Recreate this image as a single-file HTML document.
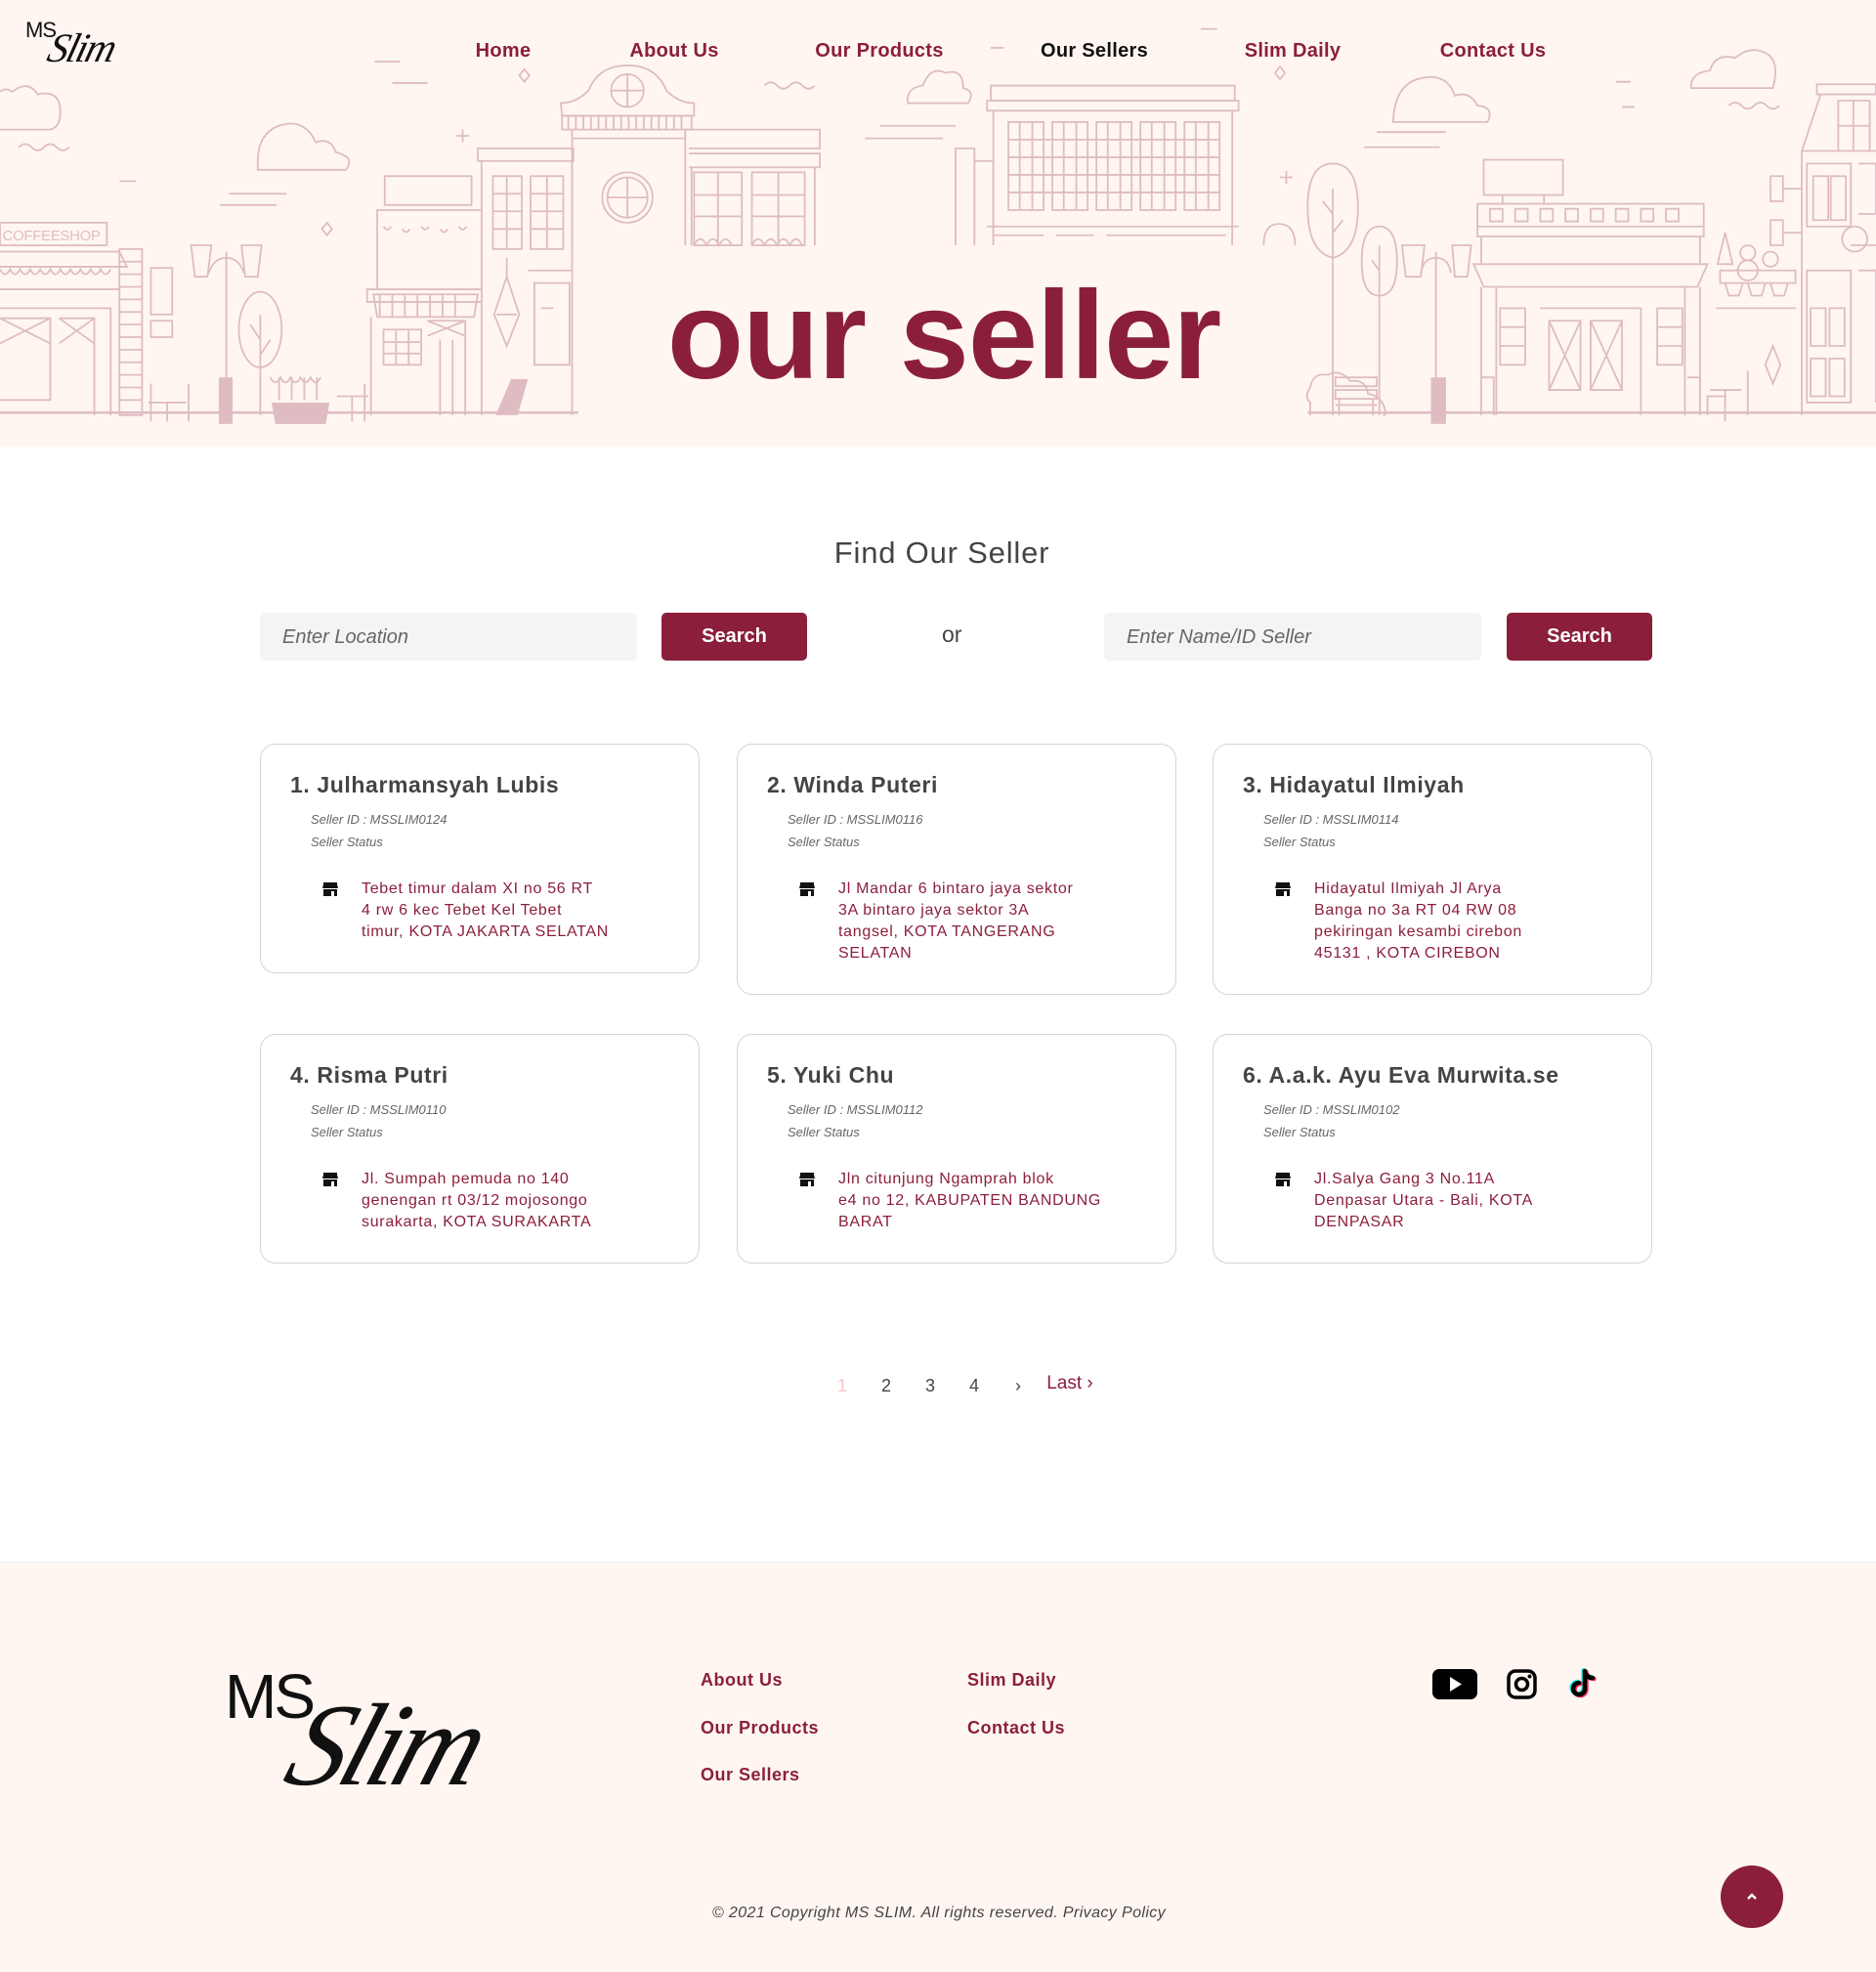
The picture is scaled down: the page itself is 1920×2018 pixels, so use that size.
<!DOCTYPE html>
<html><head><meta charset="utf-8">
<style>
*{margin:0;padding:0;box-sizing:border-box}
body{width:1920px;height:2018px;background:#fff;font-family:"Liberation Sans",sans-serif;position:relative;overflow:hidden}
.hero{position:absolute;left:0;top:0;width:1920px;height:457px;background:#fff6f1;overflow:hidden}
.hero svg{position:absolute;left:0;top:0}
.nav a{position:absolute;top:41px;font-size:20px;font-weight:bold;color:#8b1f3b;text-decoration:none;transform:translateX(-50%);white-space:nowrap;letter-spacing:.3px}
.nav a.act{color:#111}
.logo{position:absolute;left:26px;top:18px;width:110px;height:65px}
.logo .ms{position:absolute;left:0;top:0;font-size:22px;color:#111;letter-spacing:-1px}
.logo .sl{position:absolute;left:24px;top:8px;font-family:"Liberation Serif",serif;font-style:italic;font-size:42px;color:#111;transform:skewX(-15deg);letter-spacing:-2px}
.big{position:absolute;left:6px;width:1920px;text-align:center;top:270px;font-size:128px;font-weight:bold;color:#8b1f3b;letter-spacing:-1px}
h2{position:absolute;top:548px;width:1920px;text-align:center;font-size:31px;font-weight:normal;color:#444;left:4px;letter-spacing:.8px}
.inp{position:absolute;top:627px;height:49px;background:#f4f4f4;border-radius:5px;font-style:italic;color:#666;font-size:20px;padding:14px 23px}
.btn{position:absolute;top:627px;height:49px;width:149px;background:#8b1f3b;border-radius:5px;color:#fff;font-weight:bold;font-size:20px;text-align:center;line-height:49px}
.or{position:absolute;top:636px;left:964px;font-size:23px;color:#444}
.card{position:absolute;width:450px;border:1.5px solid #d4d4d4;border-radius:16px;background:#fff;padding:28px 30px 30px}
.card h3{font-size:23px;color:#444;font-weight:bold;margin-bottom:10px;letter-spacing:.6px}
.card .m{font-size:13px;font-style:italic;color:#666;padding-left:21px;line-height:23px}
.card .ad{position:relative;margin-top:26px;padding-left:73px;width:390px;white-space:nowrap;font-size:16px;line-height:22px;color:#8b1f3b;letter-spacing:.7px}
.card .ad svg{position:absolute;left:33px;top:4px}
.pg span{position:absolute;top:1408px;font-size:18px;color:#444;transform:translateX(-50%)}
.foot{position:absolute;left:0;top:1598px;width:1920px;height:420px;background:#fff6f1;border-top:1px solid #eee}
.fl{position:absolute;font-size:18px;font-weight:bold;color:#8b1f3b;letter-spacing:.5px}
</style></head><body>
<div class="hero">
<svg width="1920" height="457" viewBox="0 0 1492 355" preserveAspectRatio="none" fill="none" stroke="#dfbcc2" stroke-width="1.4">
<path d="M298 49h20M312 66h28M95 144h13M182 154h46M175 163h45M700 100h60M688 110h62M955 23h13M788 38h10M1095 105h55M1085 117h60M1285 65h12M1290 85h10"/>
<path d="M15 117q5-5 10 0q5 5 10 0q5-5 10 0q5 5 10 0M608 68q5-5 10 0q5 5 10 0q5-5 10 0q5 5 10 0M1375 84q5-5 10 0q5 5 10 0q5-5 10 0q5 5 10 0"/>
<path d="M0 103h40q8-2 8-14q0-18-18-14q-8-12-20-2q-6-4-10 0"/>
<path d="M205 135h70q8-10-8-14q-4-12-16-8q-8-18-26-14q-20 5-20 30z"/>
<path d="M722 82h48q6-10-4-12q0-16-14-12q-12-6-18 10q-14 2-12 14z"/>
<path d="M1108 97h75q6-12-8-13q-6-12-18-8q-6-18-26-14q-22 4-23 35z"/>
<path d="M1345 70h65q6-22-6-28q-12-6-24 4q-16-4-20 10q-16 2-15 14z"/>
<path d="M417 55l-4 5 4 5 4-5zM260 177l-4 5 4 5 4-5zM1018 53l-4 5 4 5 4-5zM368 103v10M363 108h10M1023 136v10M1018 141h10"/>
<rect x="0" y="177" width="85" height="18"/>
<text x="2" y="191" font-size="11.5" fill="#dfbcc2" stroke="none" font-family="Liberation Sans" textLength="78">COFFEESHOP</text>
<path d="M0 200h95l6 12H0M0 214q4 8 8 0q4 8 8 0q4 8 8 0q4 8 8 0q4 8 8 0q4 8 8 0q4 8 8 0q4 8 8 0q4 8 8 0q4 8 8 0q4 8 8 0M0 230h95M0 245h88v85M0 253h40v65h-40M47 253h28v77M0 253l40 20M40 253l-40 20M47 253l28 20M75 253l-28 20"/>
<rect x="95" y="198" width="18" height="132"/>
<path d="M95 208h18M95 218h18M95 228h18M95 238h18M95 248h18M95 258h18M95 268h18M95 278h18M95 288h18M95 298h18M95 308h18M95 318h18"/>
<rect x="120" y="213" width="17" height="37"/><rect x="120" y="255" width="17" height="13"/>
<path d="M180 200v130M180 205q-10 0-14 12M180 205q10 0 14 12M152 195h16l-3 25h-10zM192 195h16l-3 25h-10z"/>
<rect x="174" y="300" width="11" height="37" fill="#dfbcc2" stroke="none"/>
<ellipse cx="207" cy="262" rx="17" ry="30"/><path d="M207 250v80M207 270l-8-12M207 282l8-12"/>
<path d="M215 300q4 8 8 0q4 8 8 0q4 8 8 0q4 8 8 0q4 8 8 0M222 300v18M232 300v18M242 300v18M252 300v18"/>
<path d="M216 320h46l-3 17h-40z" fill="#dfbcc2" stroke="none"/>
<path d="M118 320h30M133 320v15M120 305v30M150 305v30M268 315h25M280 315v20M290 305v30"/>
<rect x="306" y="140" width="69" height="23"/>
<path d="M300 167h83v63h-83zM305 180q3 5 6 0M320 182q3 5 6 0M335 180q3 5 6 0M350 182q3 5 6 0M365 180q3 5 6 0M292 230h91v10h-91zM297 234h83l-3 18h-77zM302 234v18M312 234v18M322 234v18M332 234v18M342 234v18M352 234v18M362 234v18M295 252v78M305 262h30v28h-30zM305 272h30M305 281h30M315 262v28M325 262v28M340 255h30v75M340 255l30 12M370 255l-30 12M350 270v60M360 270v60"/>
<path d="M380 118h76v10h-76zM383 128v202M455 128v202"/>
<rect x="392" y="140" width="23" height="58"/><rect x="422" y="140" width="26" height="58"/>
<path d="M392 154h23M392 168h23M392 182h23M403 140v58M422 154h26M422 168h26M422 182h26M435 140v58"/>
<path d="M403 205v15l-10 30l10 25l10-25l-10-30M395 250h16M420 215h35M425 225h28v65h-28zM430 245h10"/>
<path d="M395 330l12-28h12l-8 28" fill="#dfbcc2"/>
<path d="M447 92l-1-10q12 0 22-10q8-20 31-20q23 0 31 20q10 10 22 10v10z"/>
<circle cx="499" cy="72" r="13"/><path d="M486 72h26M499 59v26"/>
<rect x="447" y="92" width="103" height="11"/>
<path d="M452 92v11M458 92v11M464 92v11M470 92v11M476 92v11M482 92v11M488 92v11M494 92v11M500 92v11M506 92v11M512 92v11M518 92v11M524 92v11M530 92v11M536 92v11M542 92v11M455 103v92M545 103v92M455 110h90"/>
<circle cx="499" cy="157" r="20"/><circle cx="499" cy="157" r="16"/><path d="M483 157h32M499 141v32"/>
<path d="M545 103h107v15h-104M548 122h104v11h-104M550 133v62M648 133v62"/>
<rect x="552" y="137" width="38" height="58"/><rect x="598" y="137" width="42" height="58"/>
<path d="M571 137v58M552 155h38M552 172h38M619 137v58M598 155h42M598 172h42M552 195q5-10 10 0q5-10 10 0q5-10 10 0M598 195q5-10 10 0q5-10 10 0q5-10 10 0q5-10 10 0"/>
<path d="M0 328h460" stroke-width="2"/>
<path d="M760 195v-77h15v77M775 128h15v67"/>
<rect x="788" y="68" width="194" height="12"/><rect x="785" y="80" width="200" height="8"/>
<path d="M790 88v107M980 88v107M785 180h200M790 187h40M840 187h30M880 187h95"/>
<rect x="802" y="97" width="28" height="70"/><rect x="837" y="97" width="28" height="70"/><rect x="872" y="97" width="28" height="70"/><rect x="907" y="97" width="28" height="70"/><rect x="942" y="97" width="28" height="70"/>
<path d="M802 111h168M802 125h168M802 139h168M802 153h168M811 97v70M821 97v70M846 97v70M856 97v70M881 97v70M891 97v70M916 97v70M926 97v70M951 97v70M961 97v70"/>
<path d="M1005 195q0-17 12-17q13 0 13 17"/>
<path d="M1060 130q-20 0-20 35q0 35 20 40q20-5 20-40q0-35-20-35zM1060 150v180M1060 170l-8-10M1060 185l8-10"/>
<path d="M1097 180q-14 0-14 28q0 27 14 27q14 0 14-27q0-28-14-28zM1097 195v135M1097 215l-6-8"/>
<path d="M1042 330v-10q-5-5 0-12q2-12 14-10q10-5 18 5q12-2 14 10q12 2 14 15q0 2-2 2"/>
<rect x="1062" y="300" width="33" height="7"/><rect x="1062" y="310" width="33" height="7"/><path d="M1062 322h33M1065 317v13M1092 317v13"/>
<path d="M1142 200v130M1142 205q-10 0-12 12M1142 205q10 0 12 12M1115 195h18l-3 25h-12zM1155 195h15l-3 25h-10z"/>
<rect x="1138" y="300" width="12" height="37" fill="#dfbcc2" stroke="none"/>
<rect x="1180" y="127" width="63" height="28"/><path d="M1195 155v7M1228 155v7"/>
<path d="M1175 162h180v18h-180zM1175 180h180v8h-180zM1178 188h174v22h-174zM1172 210h186l-8 18h-170zM1178 228v102M1352 228v102M1190 228v102M1340 228v102M1203 228h124"/>
<path d="M1185 166h10v10h-10zM1205 166h10v10h-10zM1225 166h10v10h-10zM1245 166h10v10h-10zM1265 166h10v10h-10zM1285 166h10v10h-10zM1305 166h10v10h-10zM1325 166h10v10h-10z"/>
<rect x="1193" y="245" width="20" height="45"/><rect x="1318" y="245" width="20" height="45"/>
<path d="M1193 260h20M1193 275h20M1318 260h20M1318 275h20M1225 245h80v85M1232 255v55h25v-55zM1265 255v55h25v-55zM1232 255l25 55M1257 255l-25 55M1265 255l25 55M1290 255l-25 55M1178 300h10v30M1342 300h10v30"/>
<path d="M1358 330v-15h15M1360 310h25M1372 310v25M1390 295v35"/>
<path d="M1372 185l-6 25h12zM1390 195a6 6 0 1 0 .1 0M1390 207a8 8 0 1 0 .1 0M1408 200a6 6 0 1 0 .1 0M1368 215h60v10h-60zM1372 225l3 10h8l3-10M1390 225l3 10h8l3-10M1408 225l3 10h8l3-10M1365 245h63M1410 275l-6 15l6 15l6-15z"/>
<path d="M1408 140h10v20h-10zM1408 175h10v20h-10zM1418 150h15M1418 185h15"/>
<path d="M1445 67h47v8h-47zM1448 75l-15 45v210M1433 120h59M1462 80h25v40h-25zM1474 80v40M1462 100h25M1437 130h35v50h-35zM1442 140h12v35h-12zM1456 140h12v35h-12zM1437 215h35v105h-35zM1440 245h12v30h-12zM1455 245h12v30h-12zM1440 285h12v30h-12zM1455 285h12v30h-12zM1475 180a10 10 0 1 0 .1 0M1472 195h20M1478 130h14v40h-14M1478 215h14v105"/>
<path d="M1040 328h452" stroke-width="2"/>
</svg>
<div class="logo"><span class="ms">MS</span><span class="sl">Slim</span></div>
<div class="nav">
<a style="left:515px">Home</a><a style="left:690px">About Us</a><a style="left:900px">Our Products</a><a class="act" style="left:1120px">Our Sellers</a><a style="left:1323px">Slim Daily</a><a style="left:1528px">Contact Us</a>
</div>
<div class="big">our seller</div>
</div>

<h2>Find Our Seller</h2>
<div class="inp" style="left:266px;width:386px">Enter Location</div>
<div class="btn" style="left:677px">Search</div>
<div class="or">or</div>
<div class="inp" style="left:1130px;width:386px">Enter Name/ID Seller</div>
<div class="btn" style="left:1542px">Search</div>

<svg width="0" height="0" style="position:absolute"><defs><symbol id="st" viewBox="0 0 16 14"><path d="M1 0h14v2l1 4H0l1-4zM1 7h14v7h-3V9H9v5H1zM3 9h4v3H3z" fill="#111"/></symbol></defs></svg>

<div class="card" style="left:266px;top:761px"><h3>1. Julharmansyah Lubis</h3><div class="m">Seller ID : MSSLIM0124</div><div class="m">Seller Status</div><div class="ad"><svg width="16" height="14"><use href="#st"/></svg>Tebet timur dalam XI no 56 RT<br>4 rw 6 kec Tebet Kel Tebet<br>timur, KOTA JAKARTA SELATAN</div></div>
<div class="card" style="left:754px;top:761px"><h3>2. Winda Puteri</h3><div class="m">Seller ID : MSSLIM0116</div><div class="m">Seller Status</div><div class="ad"><svg width="16" height="14"><use href="#st"/></svg>Jl Mandar 6 bintaro jaya sektor<br>3A bintaro jaya sektor 3A<br>tangsel, KOTA TANGERANG<br>SELATAN</div></div>
<div class="card" style="left:1241px;top:761px"><h3>3. Hidayatul Ilmiyah</h3><div class="m">Seller ID : MSSLIM0114</div><div class="m">Seller Status</div><div class="ad"><svg width="16" height="14"><use href="#st"/></svg>Hidayatul Ilmiyah Jl Arya<br>Banga no 3a RT 04 RW 08<br>pekiringan kesambi cirebon<br>45131 , KOTA CIREBON</div></div>
<div class="card" style="left:266px;top:1058px"><h3>4. Risma Putri</h3><div class="m">Seller ID : MSSLIM0110</div><div class="m">Seller Status</div><div class="ad"><svg width="16" height="14"><use href="#st"/></svg>Jl. Sumpah pemuda no 140<br>genengan rt 03/12 mojosongo<br>surakarta, KOTA SURAKARTA</div></div>
<div class="card" style="left:754px;top:1058px"><h3>5. Yuki Chu</h3><div class="m">Seller ID : MSSLIM0112</div><div class="m">Seller Status</div><div class="ad"><svg width="16" height="14"><use href="#st"/></svg>Jln citunjung Ngamprah blok<br>e4 no 12, KABUPATEN BANDUNG<br>BARAT</div></div>
<div class="card" style="left:1241px;top:1058px"><h3>6. A.a.k. Ayu Eva Murwita.se</h3><div class="m">Seller ID : MSSLIM0102</div><div class="m">Seller Status</div><div class="ad"><svg width="16" height="14"><use href="#st"/></svg>Jl.Salya Gang 3 No.11A<br>Denpasar Utara - Bali, KOTA<br>DENPASAR</div></div>

<div class="pg">
<span style="left:862px;color:#f0c8c8">1</span><span style="left:907px">2</span><span style="left:952px">3</span><span style="left:997px">4</span><span style="left:1042px">›</span><span style="left:1095px;color:#8b1f3b;top:1405px;font-size:19px">Last ›</span>
</div>

<div class="foot">
<div style="position:absolute;left:230px;top:100px;font-size:64px;color:#111;letter-spacing:-3px">MS</div>
<div style="position:absolute;left:300px;top:118px;font-family:'Liberation Serif',serif;font-style:italic;font-size:120px;color:#111;transform:skewX(-18deg);letter-spacing:-6px">Slim</div>
<div class="fl" style="left:717px;top:110px">About Us</div>
<div class="fl" style="left:717px;top:159px">Our Products</div>
<div class="fl" style="left:717px;top:207px">Our Sellers</div>
<div class="fl" style="left:990px;top:110px">Slim Daily</div>
<div class="fl" style="left:990px;top:159px">Contact Us</div>
<svg style="position:absolute;left:1466px;top:109px" width="46" height="31" viewBox="0 0 46 31"><rect width="46" height="31" rx="7" fill="#000"/><path d="M18 8l12 7.5-12 7.5z" fill="#fff"/></svg>
<svg style="position:absolute;left:1542px;top:109px" width="31" height="31" viewBox="0 0 31 31"><rect x="2" y="2" width="27" height="27" rx="7" fill="none" stroke="#000" stroke-width="3.5"/><circle cx="15.5" cy="15.5" r="6" fill="none" stroke="#000" stroke-width="3.5"/><circle cx="23.5" cy="7.5" r="2" fill="#000"/></svg>
<svg style="position:absolute;left:1603px;top:108px" width="32" height="32" viewBox="0 0 32 32"><g fill="none" stroke-width="4.5" stroke-linecap="round"><path d="M19 3v18a6 6 0 1 1-6-6M19 4q2 6 8 6" stroke="#25f4ee" transform="translate(-1.5,-1)"/><path d="M19 3v18a6 6 0 1 1-6-6M19 4q2 6 8 6" stroke="#fe2c55" transform="translate(1.5,1)"/><path d="M19 3v18a6 6 0 1 1-6-6M19 4q2 6 8 6" stroke="#000"/></g></svg>
<div style="position:absolute;left:0;width:1922px;text-align:center;top:350px;font-size:16px;font-style:italic;color:#444;letter-spacing:.4px">© 2021 Copyright MS SLIM. All rights reserved. Privacy Policy</div>
<div style="position:absolute;left:1761px;top:310px;width:64px;height:64px;border-radius:50%;background:#8b1f3b"><svg width="64" height="64" viewBox="0 0 64 64"><path d="M28 34l4-4 4 4" fill="none" stroke="#fff" stroke-width="2.5"/></svg></div>
</div>
</body></html>
